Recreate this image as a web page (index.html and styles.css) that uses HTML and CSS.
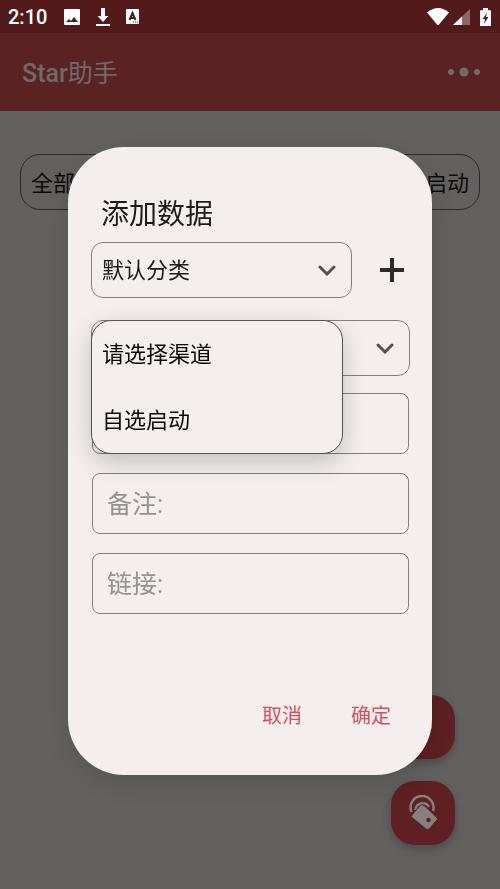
FILE: index.html
```html
<!DOCTYPE html>
<html lang="zh-CN">
<head>
<meta charset="utf-8">
<meta name="viewport" content="width=device-width, initial-scale=1">
<title>Star助手</title>
<link rel="stylesheet" href="styles.css">
</head>
<body>
<div class="status">
  <span class="clock">2:10</span>
  <svg class="image-icon" width="16" height="16" viewBox="0 0 16 16" aria-hidden="true"><path fill="#fff" fill-rule="evenodd" d="M1 0h14a1 1 0 0 1 1 1v14a1 1 0 0 1-1 1H1a1 1 0 0 1-1-1V1a1 1 0 0 1 1-1zM2 13h12l-4-5-3 4-2-2z"/></svg>
  <svg class="down-icon" width="14" height="18" viewBox="0 0 14 18" aria-hidden="true"><path fill="#fff" d="M5 0h4v8h3.500L7 14 1.500 8H5zM0 16h14v2H0z"/></svg>
  <svg class="lang-icon" width="13" height="15" viewBox="0 0 13 15" aria-hidden="true"><rect width="13" height="15" rx="1" fill="#fff"/><path fill="none" stroke="#521a1b" stroke-width="2" d="M3.500 11 6.500 4l3 7M4.500 9h4"/><path stroke="#521a1b" stroke-dasharray="1 1" d="M7 13h5"/></svg>
  <svg class="wifi-icon" width="22" height="17" viewBox="0 0 22 17" aria-hidden="true"><path fill="#fff" d="M0 4.500Q11-4.500 22 4.500L12 16.500q-1 1-2 0z"/></svg>
  <svg class="signal-icon" width="17" height="16" viewBox="0 0 17 16" aria-hidden="true"><path fill="#8b6869" d="M17 0v16H0z"/><path fill="#fff" d="M9 7.500V16H0z"/></svg>
  <svg class="battery-icon" width="11" height="18" viewBox="0 0 11 18" aria-hidden="true"><path fill="#fff" d="M3 0h5v2h2l1 1v15H0V3l1-1h2z"/><path fill="#521a1b" d="M7 5 2.500 11H5l-1 5 4.500-7H6z"/></svg>
</div>
<header class="appbar">
  <h1><b>Star</b>助手</h1>
  <button class="more" aria-label="更多"><svg width="32" height="10" viewBox="0 0 32 10"><g fill="#706a6a"><circle cx="3" cy="5" r="3"/><circle cx="16" cy="5" r="4.500"/><circle cx="29" cy="5" r="3"/></g></svg></button>
</header>
<main class="page">
  <div class="filter"><button>全部</button><button>自选启动</button></div>
</main>
<div class="fabs">
  <button class="fab" aria-label="添加"><svg width="32" height="36" viewBox="0 0 32 36"><path d="M16 9v18M7 18h18" stroke="#858080" stroke-width="3"/></svg></button>
  <button class="fab" aria-label="标签"><svg width="32" height="36" viewBox="0 0 32 36"><g fill="none" stroke="#858080" stroke-width="2.500"><path d="M4.500 17A11.500 11.500 0 1 1 26 16"/><path d="M8.500 15A7.200 7.200 0 0 1 22 12"/></g><path fill="#858080" stroke="#5e2021" d="M5 20 12.500 11Q14.500 8.500 17 10.500L30 22.500q1 1 0 2.500l-8 9q-1.500 1-3 0L5 22.500q-1-1 0-2.500z"/><circle cx="21.500" cy="25" r="2.200" fill="#5e2021"/></svg></button>
</div>
<div class="overlay">
  <form class="dialog" role="dialog" aria-labelledby="dialog-title">
    <h2 id="dialog-title">添加数据</h2>
    <div class="category">
      <div class="picker">
        <select aria-label="分类"><option>默认分类</option></select>
        <svg class="chevron" width="18" height="12" viewBox="0 0 18 12" aria-hidden="true"><path d="m2 3 7 7 7-7"/></svg>
      </div>
      <button type="button" class="add" aria-label="添加分类"><svg width="26" height="26" viewBox="0 0 26 26"><path d="M13 1v24M1 13h24" stroke="#2c2a2a" stroke-width="4"/></svg></button>
    </div>
    <div class="picker channel">
      <select aria-label="渠道"><option>请选择渠道</option><option>自选启动</option></select>
      <svg class="chevron" width="18" height="12" viewBox="0 0 18 12" aria-hidden="true"><path d="m2 3 7 7 7-7"/></svg>
      <div class="menu" role="listbox" aria-label="渠道">
        <button type="button" role="option">请选择渠道</button>
        <button type="button" role="option">自选启动</button>
      </div>
    </div>
    <div class="fields">
      <input type="text" aria-label="名称">
      <input type="text" aria-label="备注" placeholder="备注:">
      <input type="text" aria-label="链接" placeholder="链接:">
    </div>
    <div class="actions"><button type="button">取消</button><button type="button">确定</button></div>
  </form>
</div>
</body>
</html>
```
FILE: styles.css
```css
* { box-sizing: border-box; }
body {
  margin: 0;
  min-height: 100vh;
  background: #636060;
  color: #1c1a1a;
  font-family: Roboto, "Noto Sans CJK SC", sans-serif;
}
button, select, input { font: inherit; color: inherit; }
button { padding: 0; border: 0; background: none; }
svg { display: block; flex: none; }
h1, h2 { margin: 0; font-weight: 400; }

.status {
  display: flex;
  align-items: center;
  height: 33px;
  padding: 0 9px 0 8px;
  background: #521a1b;
  color: #fff;
}
.clock { font-size: 20px; font-weight: 500; }
.image-icon { margin-left: 17px; }
.down-icon { margin-left: 16px; }
.lang-icon { margin-left: 16px; }
.wifi-icon { margin-left: auto; }
.signal-icon { margin-left: 4px; }
.battery-icon { margin-left: 10px; }

.appbar {
  display: flex;
  align-items: center;
  justify-content: space-between;
  height: 78px;
  padding: 0 20px 0 22px;
  background: #5a2322;
  color: #706a6a;
}
.appbar h1 { padding-top: 4px; font-size: 25px; line-height: 36px; }
.appbar b { font-weight: 500; }

.page { padding: 43px 20px 0; }
.filter {
  display: flex;
  align-items: center;
  justify-content: space-between;
  height: 56px;
  padding: 0 10px 3px;
  border: 1px solid #2b2929;
  border-radius: 20px;
  color: #0c0b0b;
  font-size: 22px;
}

.fabs {
  position: fixed;
  right: 45px;
  bottom: 44px;
  display: grid;
  gap: 22px;
}
.fab {
  display: grid;
  place-items: center;
  width: 64px;
  height: 64px;
  border-radius: 24px;
  background: #5e2021;
  box-shadow: 0 4px 10px rgba(0, 0, 0, .25);
}

.overlay {
  position: fixed;
  inset: 0;
  padding: 147px 68px 0;
}
.dialog {
  padding: 48px 22px 36px 23px;
  border-radius: 56px;
  background: #f4efee;
  box-shadow: 0 8px 24px rgba(0, 0, 0, .12);
}
.dialog h2 { padding-left: 10px; font-size: 28px; line-height: 40px; }
.category { display: flex; align-items: center; margin-top: 7px; }
.category .picker { flex: 1; }
.add { display: grid; place-items: center; width: 58px; height: 56px; padding-left: 22px; }
.picker { position: relative; display: flex; align-items: center; }
.picker select {
  width: 100%;
  height: 56px;
  padding: 0 10px;
  border: 1px solid #858080;
  border-radius: 12px;
  background: transparent;
  appearance: none;
  font-size: 22px;
}
.chevron {
  position: absolute;
  right: 16px;
  fill: none;
  stroke: #555151;
  stroke-width: 3;
  stroke-linecap: round;
  pointer-events: none;
}
.channel { margin-top: 22px; }
.menu {
  position: absolute;
  top: 0;
  left: 0;
  display: grid;
  grid-auto-rows: 66px;
  width: 252px;
  border: 1px solid #555151;
  border-radius: 20px;
  background: #f4efee;
  box-shadow: 0 8px 24px rgba(0, 0, 0, .2);
}
.menu button { padding: 0 0 4px 10px; color: #080707; font-size: 22px; text-align: left; }

.fields { display: grid; gap: 19px; margin: 17px 1px 0; }
.fields input {
  width: 100%;
  height: 61px;
  padding: 2px 14px 0;
  border: 1px solid #858080;
  border-radius: 8px;
  background: transparent;
  font-size: 25px;
}
.fields input::placeholder { color: #969292; opacity: 1; }

.actions {
  display: flex;
  justify-content: flex-end;
  gap: 49px;
  margin-top: 79px;
  padding-right: 19px;
  color: #da5056;
  font-size: 20px;
  line-height: 46px;
}
```
